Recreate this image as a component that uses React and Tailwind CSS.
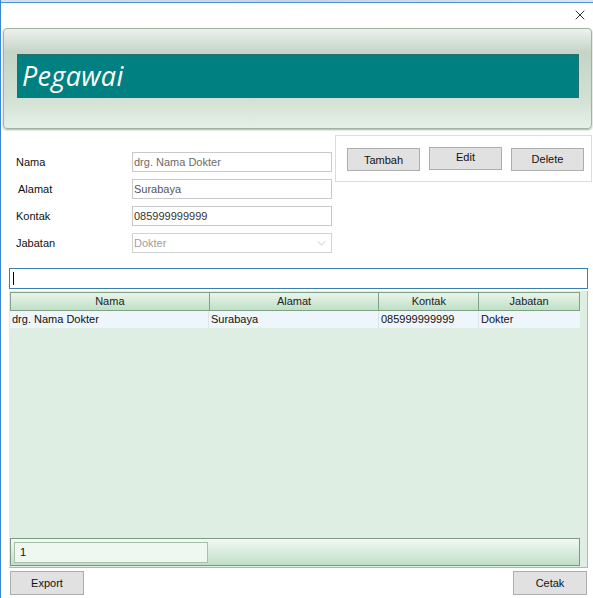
import { ChevronDown, X } from 'lucide-react';

const fields = [
  { label: 'Nama', value: 'drg. Nama Dokter', tone: 'text-[#6b6b6b]', indent: 'pl-0' },
  { label: 'Alamat', value: 'Surabaya', tone: 'text-[#555]', indent: 'pl-[2px]' },
  { label: 'Kontak', value: '085999999999', tone: 'text-[#333]', indent: 'pl-0' },
];

const columns = [
  { key: 'nama', label: 'Nama', w: 'w-[199px]' },
  { key: 'alamat', label: 'Alamat', w: 'w-[170px]' },
  { key: 'kontak', label: 'Kontak', w: 'w-[100px]' },
  { key: 'jabatan', label: 'Jabatan', w: 'w-[100px]' },
];

const rows = [
  { nama: 'drg. Nama Dokter', alamat: 'Surabaya', kontak: '085999999999', jabatan: 'Dokter' },
];

const Btn = ({ children, className = '' }) => (
  <button
    className={`h-[23px] w-[73px] bg-[#e1e1e1] border border-[#adadad] text-[11px] text-[#111] ${className}`}
  >
    {children}
  </button>
);

export default function App() {
  return (
    <div
      className="w-[593px] h-[598px] overflow-hidden bg-white flex flex-col border-l border-[#3a86cf]"
      style={{ fontFamily: '"Liberation Sans", Arial, sans-serif' }}
    >
      {/* faded strip of the window behind + window frame */}
      <div className="h-[2px] bg-gradient-to-r from-[#d6e1ec] via-[#c7d3e6] to-[#dde5ee]" />
      <div className="h-px bg-[#4a93d8]" />

      {/* title bar */}
      <div className="h-[25px] flex justify-end items-start pr-[5px] pt-[4px]">
        <X size={16} strokeWidth={1.3} className="text-[#111]" />
      </div>

      {/* header panel */}
      <div className="ml-[2px] w-[589px] h-[101px] rounded-[4px] border border-[#9fb3a3] shadow-[0_1px_2px_rgba(60,80,60,0.45)] bg-[linear-gradient(to_bottom,#eef1ee_0%,#c4d4c6_24%,#d2e1d4_70%,#e5f0e7_100%)] pt-[25px] pl-[13px]">
        <div className="w-[562px] h-[44px] bg-[#008080] border border-[#2f6d6d] flex items-center pl-[4px]">
          <span
            className="text-white text-[27px] italic leading-none -mt-[2px] tracking-[0.3px]"
            style={{ fontFamily: '"Open Sans", "DejaVu Sans", sans-serif', fontWeight: 400 }}
          >
            Pegawai
          </span>
        </div>
      </div>

      {/* form + action buttons */}
      <div className="flex mt-[6px]">
        <div className="w-[334px] pt-[17px] pl-[15px] flex flex-col gap-[7px]">
          {fields.map((f) => (
            <div key={f.label} className="flex items-center h-[20px]">
              <span className={`w-[116px] text-[11px] text-[#111] ${f.indent}`}>{f.label}</span>
              <div className={`w-[200px] h-[20px] border border-[#c9c9c9] flex items-center pl-[1px] text-[11px] ${f.tone}`}>
                {f.value}
              </div>
            </div>
          ))}
          <div className="flex items-center h-[20px]">
            <span className="w-[116px] text-[11px] text-[#111]">Jabatan</span>
            <div className="w-[200px] h-[20px] border border-[#d2d2d2] flex items-center justify-between pl-[1px] pr-[3px] text-[11px] text-[#a0a0a0]">
              <span>Dokter</span>
              <ChevronDown size={13} strokeWidth={1.2} className="text-[#a8a8a8]" />
            </div>
          </div>
        </div>
        <div className="w-[257px] h-[47px] border border-[#dcdcdc] flex items-start gap-[9px] pl-[11px] pt-[11px]">
          <Btn className="mt-px pt-[2px]">Tambah</Btn>
          <Btn className="leading-[18px] pb-[3px]">Edit</Btn>
          <Btn className="mt-px">Delete</Btn>
        </div>
      </div>

      {/* search box */}
      <div className="mt-[15px] ml-[8px] w-[579px] h-[21px] border border-[#3c7fb1] flex items-center pl-[3px]">
        <div className="w-px h-[13px] bg-black" />
      </div>

      {/* grid */}
      <div className="mt-[2px] ml-[8px] w-[579px] h-[277px] border-r border-b border-[#b5b5b5] bg-[#deeee2] flex flex-col">
        <div className="flex-1 pl-[1px] pt-[1px]">
          <div className="flex w-[570px] h-[19px] border border-[#80a087] bg-[linear-gradient(to_bottom,#eaf5ea,#c0dfc6)]">
            {columns.map((c, i) => (
              <div
                key={c.key}
                className={`${c.w} flex items-center justify-center text-[11px] text-[#222] ${i < columns.length - 1 ? 'border-r border-[#80a087]' : ''}`}
              >
                {c.label}
              </div>
            ))}
          </div>
          {rows.map((r) => (
            <div key={r.nama} className="flex w-[570px] h-[17px] bg-[#eef5fb]">
              {columns.map((c, i) => (
                <div
                  key={c.key}
                  className={`${c.w} flex items-center pl-[2px] text-[11px] text-[#111] ${i < columns.length - 1 ? 'border-r border-[#d9e6ec]' : ''}`}
                >
                  {r[c.key]}
                </div>
              ))}
            </div>
          ))}
        </div>
        <div className="ml-[1px] mb-[1px] w-[570px] h-[28px] border border-[#7c9a82] bg-[linear-gradient(to_bottom,#f3f9f4,#c0dfc7)] flex items-center pl-[3px]">
          <div className="w-[194px] h-[21px] bg-[#eef7f0] border border-[#a6c0ab] flex items-center pl-[5px] text-[11px] text-[#111]">
            1
          </div>
        </div>
      </div>

      {/* bottom buttons */}
      <div className="mt-[3px] ml-[9px] w-[577px] flex justify-between">
        <Btn className="w-[74px] h-[24px]">Export</Btn>
        <Btn className="w-[74px] h-[24px]">Cetak</Btn>
      </div>
    </div>
  );
}
